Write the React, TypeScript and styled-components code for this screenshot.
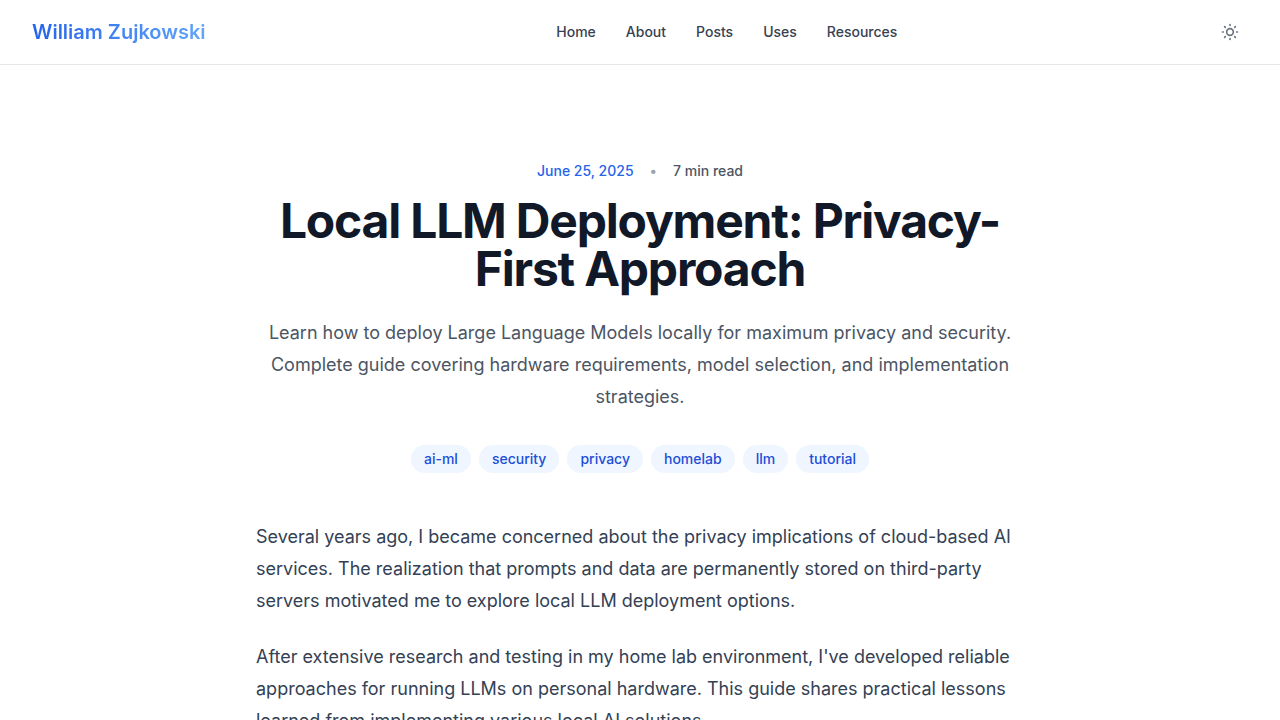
import React from "react";
import styled, { createGlobalStyle } from "styled-components";

const GlobalStyle = createGlobalStyle`
  *, *::before, *::after { box-sizing: border-box; }
  body {
    margin: 0;
    background: #ffffff;
    color: #334155;
    font-family: Inter, "Liberation Sans", sans-serif;
    font-size: 16px;
  }
`;

const Header = styled.header`
  display: flex;
  align-items: center;
  justify-content: space-between;
  height: 65px;
  padding: 0 32px;
  border-bottom: 1px solid #e5e7eb;
`;

const Brand = styled.a`
  font-size: 20px;
  font-weight: 600;
  line-height: 28px;
  text-decoration: none;
  color: transparent;
  background: linear-gradient(to right, #2563eb, #60a5fa);
  background-clip: text;
  -webkit-background-clip: text;
`;

const Nav = styled.nav`
  display: flex;
  gap: 6px;
  margin-left: 36px;
`;

const NavLink = styled.a`
  padding: 8px 12px;
  font-size: 14px;
  font-weight: 500;
  line-height: 20px;
  color: #374151;
  text-decoration: none;
`;

const ThemeButton = styled.button`
  display: flex;
  padding: 8px;
  border: 0;
  border-radius: 8px;
  background: none;
  color: #6b7280;
`;

const Article = styled.article`
  max-width: 768px;
  margin: 0 auto;
  padding: 96px 0 64px;
`;

const Intro = styled.header`
  display: flex;
  flex-direction: column;
  align-items: center;
  text-align: center;
  margin-bottom: 48px;
`;

const Meta = styled.div`
  display: flex;
  gap: 16px;
  font-size: 14px;
  font-weight: 500;
  line-height: 20px;
  color: #4b5563;
`;

const PublishDate = styled.time`
  color: #2563eb;
`;

const Dot = styled.span`
  color: #9ca3af;
`;

const Title = styled.h1`
  margin: 16px 0 24px;
  font-size: 48px;
  font-weight: 700;
  line-height: 48px;
  letter-spacing: -0.025em;
  color: #111827;
`;

const Summary = styled.p`
  margin: 0 0 32px;
  font-size: 18px;
  line-height: 32px;
  color: #4b5563;
`;

const Tags = styled.div`
  display: flex;
  flex-wrap: wrap;
  justify-content: center;
  gap: 8px;
`;

const Tag = styled.a`
  padding: 4px 13px;
  border-radius: 14px;
  background: #eff6ff;
  color: #1d4ed8;
  font-size: 14px;
  font-weight: 500;
  line-height: 20px;
  text-decoration: none;
`;

const Paragraph = styled.p`
  margin: 0 0 24px;
  font-size: 18px;
  line-height: 32px;
  color: #334155;
`;

const SunIcon = () => (
  <svg width="20" height="20" viewBox="0 0 24 24" fill="none" stroke="currentColor" strokeWidth="2" strokeLinecap="round" strokeLinejoin="round" aria-hidden="true">
    <path d="M12 3v1m0 16v1m9-9h-1M4 12H3m15.364 6.364l-.707-.707M6.343 6.343l-.707-.707m12.728 0l-.707.707M6.343 17.657l-.707.707M16 12a4 4 0 11-8 0 4 4 0 018 0z" />
  </svg>
);

const links = ["Home", "About", "Posts", "Uses", "Resources"];
const tags = ["ai-ml", "security", "privacy", "homelab", "llm", "tutorial"];

export default function App() {
  return (
    <>
      <GlobalStyle />
      <Header>
        <Brand href="#home">William Zujkowski</Brand>
        <Nav>
          {links.map((label) => (
            <NavLink key={label} href={`#${label.toLowerCase()}`}>{label}</NavLink>
          ))}
        </Nav>
        <ThemeButton type="button" aria-label="Toggle theme"><SunIcon /></ThemeButton>
      </Header>
      <main>
        <Article>
          <Intro>
            <Meta>
              <PublishDate dateTime="2025-06-25">June 25, 2025</PublishDate>
              <Dot>•</Dot>
              <span>7 min read</span>
            </Meta>
            <Title>Local LLM Deployment: Privacy-First Approach</Title>
            <Summary>
              Learn how to deploy Large Language Models locally for maximum privacy and security. Complete
              guide covering hardware requirements, model selection, and implementation strategies.
            </Summary>
            <Tags>
              {tags.map((tag) => (
                <Tag key={tag} href={`#tag-${tag}`}>{tag}</Tag>
              ))}
            </Tags>
          </Intro>
          <Paragraph>
            Several years ago, I became concerned about the privacy implications of cloud-based AI services.
            The realization that prompts and data are permanently stored on third-party servers motivated me
            to explore local LLM deployment options.
          </Paragraph>
          <Paragraph>
            After extensive research and testing in my home lab environment, I've developed reliable
            approaches for running LLMs on personal hardware. This guide shares practical lessons learned
            from implementing various local AI solutions.
          </Paragraph>
        </Article>
      </main>
    </>
  );
}
